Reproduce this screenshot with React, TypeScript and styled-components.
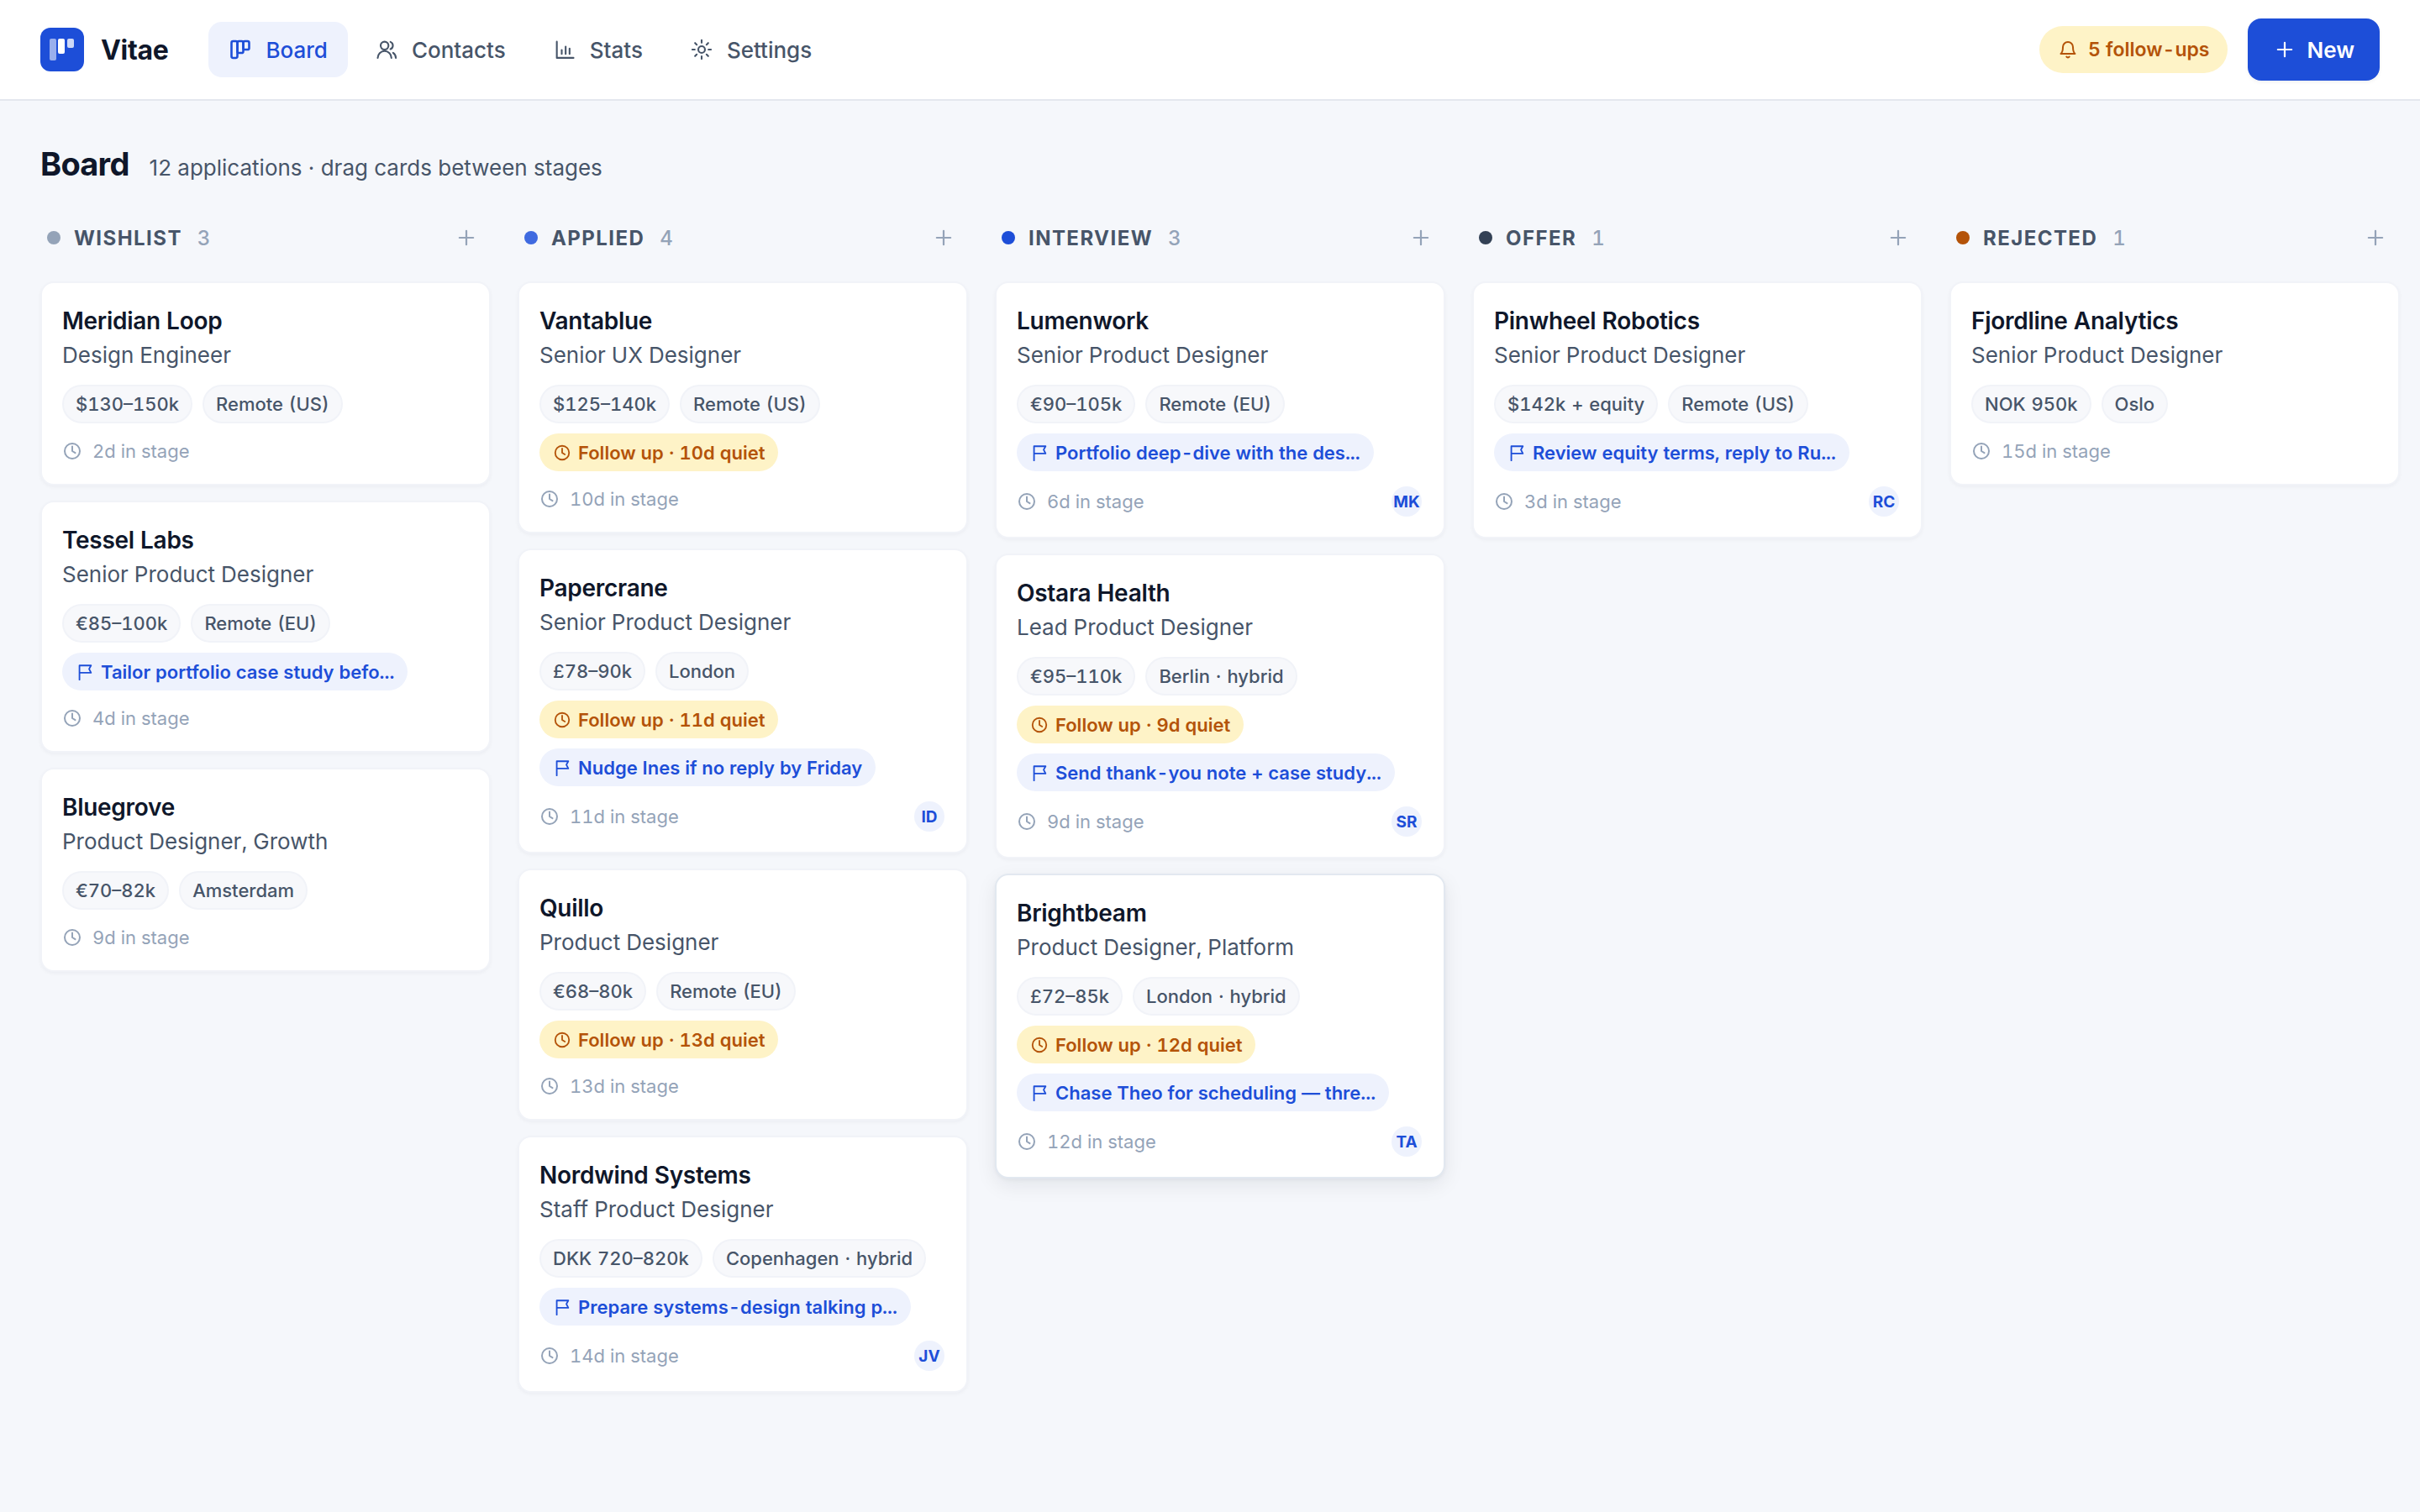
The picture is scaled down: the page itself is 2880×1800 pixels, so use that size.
import React from "react";
import styled, { createGlobalStyle } from "styled-components";

const GlobalStyle = createGlobalStyle`
  * { box-sizing: border-box; }
  html, body { margin: 0; padding: 0; background: #f5f7fb; }
  body {
    font-family: Inter, "Noto Sans", sans-serif;
    font-variant-numeric: tabular-nums;
    color: #0f172a;
    min-height: 1800px;
  }
`;

const Page = styled.div`
  width: 2880px;
  min-height: 1800px;
  background: #f5f7fb;
  overflow: hidden;
`;
const TopBar = styled.header`
  height: 120px;
  background: #fff;
  border-bottom: 2px solid #e4e7ee;
  display: flex;
  align-items: center;
  padding: 0 48px;
`;
const Brand = styled.div`
  display: flex;
  align-items: center;
  gap: 20px;
  margin-right: 48px;
`;
const LogoMark = styled.div`
  width: 52px;
  height: 52px;
  border-radius: 12px;
  background: #1d4ed8;
  display: flex;
  align-items: center;
  justify-content: center;
`;
const BrandName = styled.span`
  font-size: 32px;
  font-weight: 700;
  letter-spacing: -0.32px;
  color: #0f172a;
`;
const Nav = styled.nav`
  display: flex;
  align-items: center;
  gap: 8px;
`;
const NavItem = styled.a<{ $active?: boolean }>`
  height: 66px;
  padding: 0 24px;
  display: flex;
  align-items: center;
  gap: 16px;
  border-radius: 16px;
  font-size: 26px;
  font-weight: 500;
  color: ${(p) => (p.$active ? "#1d4ed8" : "#475569")};
  background: ${(p) => (p.$active ? "#eef2fd" : "transparent")};
`;
const Spacer = styled.div`
  flex: 1;
`;
const Alerts = styled.div`
  height: 56px;
  padding: 0 22px;
  margin-right: 24px;
  display: flex;
  align-items: center;
  gap: 12px;
  border-radius: 28px;
  background: #fef3c7;
  color: #b45309;
  font-size: 23px;
  font-weight: 600;
`;
const NewButton = styled.button`
  height: 74px;
  padding: 0 30px;
  border: 0;
  border-radius: 16px;
  background: #1d4ed8;
  color: #fff;
  font-family: inherit;
  font-size: 26px;
  font-weight: 600;
  display: flex;
  align-items: center;
  justify-content: center;
  gap: 12px;
  box-shadow: 0 2px 4px rgba(15, 23, 42, 0.06);
`;
const Main = styled.main`
  padding: 52px 24px 0 48px;
`;
const Heading = styled.div`
  display: flex;
  align-items: baseline;
  gap: 24px;
  height: 46px;
`;
const Title = styled.h1`
  margin: 0;
  font-size: 38px;
  font-weight: 700;
  letter-spacing: -0.76px;
  color: #0f172a;
`;
const Subtitle = styled.span`
  font-size: 26px;
  font-variant-numeric: normal;
  color: #475569;
`;
const Board = styled.div`
  margin-top: 45px;
  display: grid;
  grid-template-columns: repeat(5, 536px);
  gap: 32px;
  align-items: start;
`;
const Column = styled.section`
  display: flex;
  flex-direction: column;
  gap: 18px;
`;
const ColumnHead = styled.div`
  height: 40px;
  padding: 0 8px;
  margin-bottom: 14px;
  display: flex;
  align-items: center;
  gap: 16px;
`;
const Dot = styled.span<{ $color: string }>`
  width: 16px;
  height: 16px;
  border-radius: 50%;
  background: ${(p) => p.$color};
`;
const StageName = styled.span`
  font-size: 24px;
  font-weight: 700;
  letter-spacing: 1.44px;
  color: #475569;
`;
const StageCount = styled.span`
  font-size: 24px;
  font-weight: 500;
  color: #94a3b8;
  margin-left: 2px;
`;
const AddStage = styled.span`
  margin-left: auto;
  margin-right: 7px;
  display: flex;
  color: #94a3b8;
`;
const Card = styled.article<{ $lifted?: boolean }>`
  background: #fff;
  border: 2px solid ${(p) => (p.$lifted ? "#e2e8f0" : "#f1f3f8")};
  border-radius: 16px;
  padding: 24px;
  display: flex;
  flex-direction: column;
  align-items: flex-start;
  box-shadow: ${(p) =>
    p.$lifted
      ? "0 8px 24px rgba(15, 23, 42, 0.08), 0 2px 4px rgba(15, 23, 42, 0.04)"
      : "0 2px 4px rgba(15, 23, 42, 0.04)"};
`;
const Company = styled.h3`
  margin: 0;
  font-size: 28px;
  line-height: 42px;
  font-weight: 600;
  letter-spacing: -0.28px;
  color: #0f172a;
`;
const Role = styled.p`
  margin: 0;
  font-size: 26px;
  line-height: 39px;
  color: #475569;
`;
const Tags = styled.div`
  margin-top: 16px;
  display: flex;
  gap: 12px;
`;
const Tag = styled.span`
  height: 46px;
  padding: 0 14px;
  display: flex;
  align-items: center;
  white-space: nowrap;
  word-spacing: 1px;
  border: 2px solid #f1f3f8;
  border-radius: 23px;
  background: #f7f8fb;
  font-size: 22px;
  font-weight: 500;
  color: #475569;
`;
const FollowUp = styled.div`
  margin-top: 12px;
  height: 45px;
  padding: 0 16px;
  display: flex;
  align-items: center;
  gap: 8px;
  border-radius: 23px;
  background: #fef3c7;
  color: #b45309;
  font-size: 22px;
  font-weight: 600;
`;
const Note = styled.div`
  margin-top: 12px;
  height: 45px;
  padding: 0 16px;
  display: flex;
  align-items: center;
  gap: 8px;
  border-radius: 23px;
  background: #eef2fd;
  color: #1d4ed8;
  font-size: 22px;
  font-weight: 600;
`;
const Footer = styled.div`
  margin-top: 18px;
  width: 100%;
  min-height: 30px;
  display: flex;
  align-items: center;
  gap: 12px;
  color: #94a3b8;
  font-size: 22px;
`;
const Avatar = styled.span`
  margin-left: auto;
  margin-right: 2px;
  width: 36px;
  height: 36px;
  border-radius: 50%;
  background: #eef2fd;
  color: #1d4ed8;
  display: flex;
  align-items: center;
  justify-content: center;
  font-size: 19px;
  font-weight: 700;
`;

type IconProps = { size?: number; sw?: number; children: React.ReactNode };
const Icon = ({ size = 28, sw = 1.8, children }: IconProps) => (
  <svg
    width={size}
    height={size}
    viewBox="0 0 24 24"
    fill="none"
    stroke="currentColor"
    strokeWidth={sw}
    strokeLinecap="round"
    strokeLinejoin="round"
    style={{ flex: "none" }}
  >
    {children}
  </svg>
);

const LogoIcon = () => (
  <svg width="52" height="52" viewBox="0 0 52 52">
    <rect x="11" y="13" width="8" height="26" rx="2" fill="#fff" fillOpacity="0.55" />
    <rect x="21" y="13" width="8" height="18" rx="2" fill="#fff" />
    <rect x="32" y="13" width="8" height="11" rx="2" fill="#fff" fillOpacity="0.78" />
  </svg>
);
const BoardIcon = () => (
  <Icon sw={2.2}>
    <rect x="3" y="3.5" width="6" height="17" rx="1.6" />
    <rect x="9" y="3.5" width="6" height="12" rx="1.6" />
    <rect x="15" y="3.5" width="6" height="8.5" rx="1.6" />
  </Icon>
);
const UsersIcon = () => (
  <Icon>
    <circle cx="10" cy="8" r="4" />
    <path d="M3 20.5a7 7 0 0 1 14 0" />
    <path d="M16 4.2a4 4 0 0 1 0 7.4" />
    <path d="M21.5 20.5a6.5 6.5 0 0 0-2.8-5.2" />
  </Icon>
);
const StatsIcon = () => (
  <Icon>
    <path d="M4 4v16.5h17" />
    <path d="M9 16.5v-4" />
    <path d="M13 16.5V9" />
    <path d="M17 16.5v-5.5" />
  </Icon>
);
const SunIcon = () => (
  <Icon>
    <circle cx="12" cy="12" r="3.4" />
    <path d="M12 2.5v2.5M12 19v2.5M2.5 12H5M19 12h2.5M5.3 5.3 7 7M17 17l1.7 1.7M5.3 18.7 7 17M17 7l1.7-1.7" />
  </Icon>
);
const BellIcon = () => (
  <Icon size={24} sw={2}>
    <path d="M6 9a6 6 0 0 1 12 0c0 6 2.5 8 2.5 8h-17S6 15 6 9" />
    <path d="M10.3 20.5a2 2 0 0 0 3.4 0" />
  </Icon>
);
const PlusIcon = () => (
  <Icon size={28} sw={1.9}>
    <path d="M12 5v14M5 12h14" />
  </Icon>
);
const ClockIcon = ({ size = 22 }: { size?: number }) => (
  <Icon size={size} sw={2}>
    <circle cx="12" cy="12" r="9" />
    <path d="M12 6.5V12l3.5 2.2" />
  </Icon>
);
const FlagIcon = () => (
  <Icon size={22} sw={2}>
    <path d="M5 22V3.5h15l-2.5 4.5 2.5 5H5" />
  </Icon>
);

type CardData = {
  company: string;
  role: string;
  tags: [string, string];
  quiet?: number;
  note?: string;
  days: number;
  owner?: string;
  lifted?: boolean;
};
type Stage = { name: string; color: string; cards: CardData[] };

const stages: Stage[] = [
  {
    name: "WISHLIST",
    color: "#94a3b8",
    cards: [
      { company: "Meridian Loop", role: "Design Engineer", tags: ["$130–150k", "Remote (US)"], days: 2 },
      { company: "Tessel Labs", role: "Senior Product Designer", tags: ["€85–100k", "Remote (EU)"], note: "Tailor portfolio case study befo...", days: 4 },
      { company: "Bluegrove", role: "Product Designer, Growth", tags: ["€70–82k", "Amsterdam"], days: 9 },
    ],
  },
  {
    name: "APPLIED",
    color: "#3f6ae0",
    cards: [
      { company: "Vantablue", role: "Senior UX Designer", tags: ["$125–140k", "Remote (US)"], quiet: 10, days: 10 },
      { company: "Papercrane", role: "Senior Product Designer", tags: ["£78–90k", "London"], quiet: 11, note: "Nudge Ines if no reply by Friday", days: 11, owner: "ID" },
      { company: "Quillo", role: "Product Designer", tags: ["€68–80k", "Remote (EU)"], quiet: 13, days: 13 },
      { company: "Nordwind Systems", role: "Staff Product Designer", tags: ["DKK 720–820k", "Copenhagen · hybrid"], note: "Prepare systems-design talking p...", days: 14, owner: "JV" },
    ],
  },
  {
    name: "INTERVIEW",
    color: "#1d4ed8",
    cards: [
      { company: "Lumenwork", role: "Senior Product Designer", tags: ["€90–105k", "Remote (EU)"], note: "Portfolio deep-dive with the des...", days: 6, owner: "MK" },
      { company: "Ostara Health", role: "Lead Product Designer", tags: ["€95–110k", "Berlin · hybrid"], quiet: 9, note: "Send thank-you note + case study...", days: 9, owner: "SR" },
      { company: "Brightbeam", role: "Product Designer, Platform", tags: ["£72–85k", "London · hybrid"], quiet: 12, note: "Chase Theo for scheduling — thre...", days: 12, owner: "TA", lifted: true },
    ],
  },
  {
    name: "OFFER",
    color: "#334155",
    cards: [
      { company: "Pinwheel Robotics", role: "Senior Product Designer", tags: ["$142k + equity", "Remote (US)"], note: "Review equity terms, reply to Ru...", days: 3, owner: "RC" },
    ],
  },
  {
    name: "REJECTED",
    color: "#b45309",
    cards: [
      { company: "Fjordline Analytics", role: "Senior Product Designer", tags: ["NOK 950k", "Oslo"], days: 15 },
    ],
  },
];

const ApplicationCard = ({ card }: { card: CardData }) => (
  <Card $lifted={card.lifted}>
    <Company>{card.company}</Company>
    <Role>{card.role}</Role>
    <Tags>
      {card.tags.map((t) => (
        <Tag key={t}>{t}</Tag>
      ))}
    </Tags>
    {card.quiet !== undefined && (
      <FollowUp>
        <ClockIcon />
        Follow up · {card.quiet}d quiet
      </FollowUp>
    )}
    {card.note && (
      <Note>
        <FlagIcon />
        {card.note}
      </Note>
    )}
    <Footer>
      <ClockIcon size={24} />
      {card.days}d in stage
      {card.owner && <Avatar>{card.owner}</Avatar>}
    </Footer>
  </Card>
);

export default function App() {
  return (
    <Page>
      <GlobalStyle />
      <TopBar>
        <Brand>
          <LogoMark>
            <LogoIcon />
          </LogoMark>
          <BrandName>Vitae</BrandName>
        </Brand>
        <Nav>
          <NavItem $active>
            <BoardIcon />
            Board
          </NavItem>
          <NavItem>
            <UsersIcon />
            Contacts
          </NavItem>
          <NavItem>
            <StatsIcon />
            Stats
          </NavItem>
          <NavItem>
            <SunIcon />
            Settings
          </NavItem>
        </Nav>
        <Spacer />
        <Alerts>
          <BellIcon />5 follow-ups
        </Alerts>
        <NewButton>
          <PlusIcon />
          New
        </NewButton>
      </TopBar>
      <Main>
        <Heading>
          <Title>Board</Title>
          <Subtitle>12 applications · drag cards between stages</Subtitle>
        </Heading>
        <Board>
          {stages.map((s) => (
            <Column key={s.name}>
              <ColumnHead>
                <Dot $color={s.color} />
                <StageName>{s.name}</StageName>
                <StageCount>{s.cards.length}</StageCount>
                <AddStage>
                  <PlusIcon />
                </AddStage>
              </ColumnHead>
              {s.cards.map((c) => (
                <ApplicationCard key={c.company} card={c} />
              ))}
            </Column>
          ))}
        </Board>
      </Main>
    </Page>
  );
}
